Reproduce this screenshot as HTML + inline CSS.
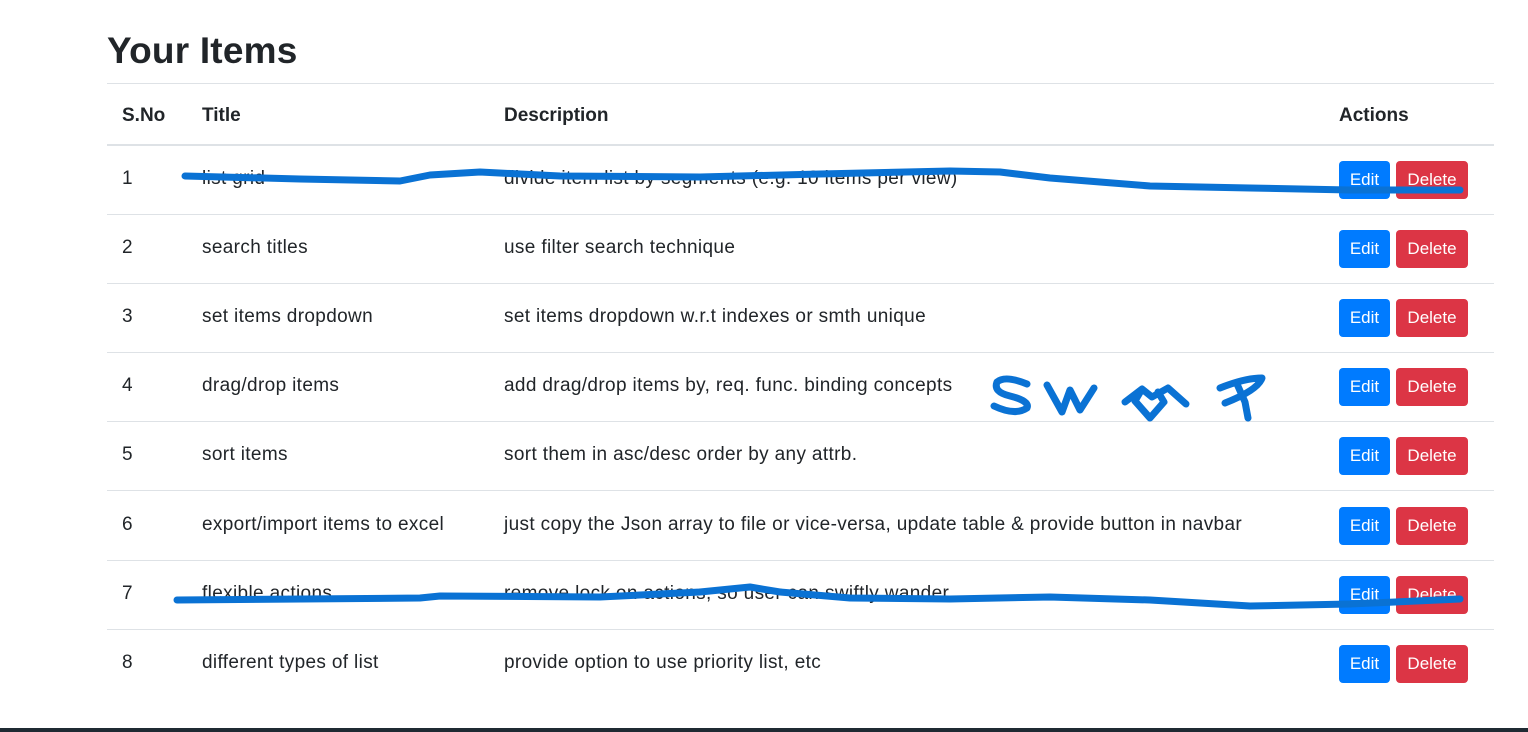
<!DOCTYPE html>
<html><head><style>
body{margin:0;width:1528px;height:732px;background:#fff;position:relative;overflow:hidden;font-family:"Liberation Sans",sans-serif;color:#212529}
h1{position:absolute;left:107px;top:30px;margin:0;font-size:37px;font-weight:bold;letter-spacing:0.2px}
.line{position:absolute;left:107px;width:1387px;height:1px;background:#dee2e6}
.t{position:absolute;font-size:19px;letter-spacing:0.35px;white-space:nowrap}
.h{font-weight:bold;letter-spacing:0}
.b{position:absolute;height:38px;border-radius:4px;color:#fff;font-size:17px;line-height:38px;text-align:center}
.e{background:#007bff;left:1339px;width:51px}
.d{background:#dc3545;left:1396px;width:72px}
.bar{position:absolute;left:0;top:728px;width:1528px;height:4px;background:#1f2a33}
</style></head><body>
<h1>Your Items</h1>
<div class="line" style="top:83px"></div>
<div class="line" style="top:144px;height:2px"></div>
<div class="t h" style="left:122px;top:105px">S.No</div>
<div class="t h" style="left:202px;top:105px">Title</div>
<div class="t h" style="left:504px;top:105px">Description</div>
<div class="t h" style="left:1339px;top:105px">Actions</div>
<div id="rows"></div>
<script>
const d=[["1","list grid","divide item list by segments (e.g. 10 items per view)"],["2","search titles","use filter search technique"],["3","set items dropdown","set items dropdown w.r.t indexes or smth unique"],["4","drag/drop items","add drag/drop items by, req. func. binding concepts"],["5","sort items","sort them in asc/desc order by any attrb."],["6","export/import items to excel","just copy the Json array to file or vice-versa, update table & provide button in navbar"],["7","flexible actions","remove lock on actions, so user can swiftly wander"],["8","different types of list","provide option to use priority list, etc"]];
let h="";d.forEach((r,i)=>{const y=146+i*69.1;
h+=`<div class="t" style="left:122px;top:${y+22}px">${r[0]}</div><div class="t" style="left:202px;top:${y+22}px">${r[1]}</div><div class="t" style="left:504px;top:${y+22}px">${r[2].replace('&','&amp;')}</div><div class="b e" style="top:${y+15}px">Edit</div><div class="b d" style="top:${y+15}px">Delete</div>`;
if(i<7)h+=`<div class="line" style="top:${y+68}px"></div>`;});
document.getElementById("rows").innerHTML=h;
</script>
<svg style="position:absolute;left:0;top:0" width="1528" height="732" fill="none" stroke="#0a72d4" stroke-width="7" stroke-linecap="round" stroke-linejoin="round">
<path d="M185 176 L300 179 L400 181 L430 175 L480 172 L560 176 L700 177 L820 174 L950 171 L1000 172 L1050 178 L1100 182 L1150 186 L1250 188 L1350 190 L1460 190"/>
<path d="M177 600 L420 598 L440 596 L600 597 L700 592 L750 587 L780 592 L850 598 L950 599 L1050 597 L1150 600 L1250 606 L1350 604 L1460 599"/>
<path d="M1027 384 Q1005 375 997 382 Q993 392 1010 396 Q1030 401 1027 408 Q1015 416 994 406"/>
<path d="M1047 385 L1062 412 L1070 390 L1080 410 L1094 388"/>
<path d="M1125 402 L1142 389 L1152 397 L1168 388 L1186 404 M1142 389 L1135 401 L1150 418 L1164 402 L1158 392"/>
<path d="M1220 388 Q1245 378 1262 378 Q1258 390 1225 403 M1237 384 L1245 402 L1248 418"/>
</svg>
<div class="bar"></div>
</body></html>
